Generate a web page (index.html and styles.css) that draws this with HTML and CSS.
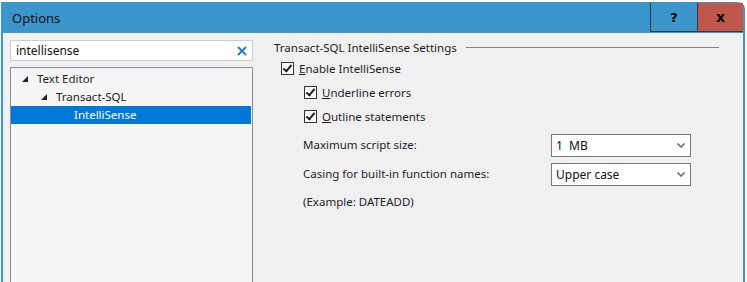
FILE: index.html
```html
<!DOCTYPE html>
<html lang="en">
<head>
    <meta charset="UTF-8">
    <title>Options</title>
    <link rel="stylesheet" href="styles.css">
</head>
<body>
    <div class="window">
        <div class="titlebar">
            <span class="title">Options</span>
            <div class="title-buttons">
                <div class="tbtn help">?</div>
                <div class="tbtn close">x</div>
            </div>
        </div>
        <div class="content">
            <div class="left-pane">
                <div class="search">
                    <span class="search-text">intellisense</span>
                    <svg class="search-clear" width="10" height="10" viewBox="0 0 10 10">
                        <path d="M1 1 L9 9 M9 1 L1 9" stroke="#1e7ad0" stroke-width="1.8"/>
                    </svg>
                </div>
                <div class="tree">
                    <div class="tree-row level0"><span class="arrow"></span>Text Editor</div>
                    <div class="tree-row level1"><span class="arrow"></span>Transact-SQL</div>
                    <div class="tree-row level2 selected">IntelliSense</div>
                </div>
            </div>
            <div class="right-pane">
                <div class="group-title">
                    <span>Transact-SQL IntelliSense Settings</span>
                    <div class="group-line"></div>
                </div>
                <label class="check"><span class="box"></span><span><u>E</u>nable IntelliSense</span></label>
                <div class="sub">
                    <label class="check"><span class="box"></span><span><u>U</u>nderline errors</span></label>
                    <label class="check"><span class="box"></span><span><u>O</u>utline statements</span></label>
                    <div class="fields">
                        <div class="field">
                            <span>Maximum script size:</span>
                            <div class="select">1&nbsp; MB
                                <svg class="chev" width="8" height="5" viewBox="0 0 8 5"><path d="M0.5 0.5 L4 4 L7.5 0.5" fill="none" stroke="#707070" stroke-width="1.6"/></svg>
                            </div>
                        </div>
                        <div class="field">
                            <span>Casing for built-in function names:</span>
                            <div class="select">Upper case
                                <svg class="chev" width="8" height="5" viewBox="0 0 8 5"><path d="M0.5 0.5 L4 4 L7.5 0.5" fill="none" stroke="#707070" stroke-width="1.6"/></svg>
                            </div>
                        </div>
                        <div class="example">(Example: DATEADD)</div>
                    </div>
                </div>
            </div>
        </div>
    </div>
</body>
</html>
```

FILE: styles.css
```css
html, body {
    margin: 0;
    height: 100%;
    background: #ffffff;
    overflow: hidden;
}
body {
    font-family: "Noto Sans", "Open Sans", sans-serif;
    font-size: 11.5px;
    color: #1e1e1e;
}
.window {
    margin: 2px 0 0 1px;
    width: 744px;
    height: 290px;
    background: #f0f0f0;
    border-left: 2px solid #3c96cb;
    border-right: 2px solid #3c96cb;
    border-top-right-radius: 7px;
    box-sizing: border-box;
    display: flex;
    flex-direction: column;
}
.titlebar {
    height: 31px;
    background: #3c96cb;
    display: flex;
    justify-content: space-between;
    border-top-right-radius: 6px;
}
.title {
    font-size: 13px;
    color: #111;
    padding: 7px 0 0 9px;
}
.title-buttons {
    display: flex;
    margin-top: 1px;
    height: 30px;
}
.tbtn {
    width: 46px;
    height: 29px;
    box-sizing: border-box;
    border-bottom: 1px solid #3a3a3a;
    border-left: 1px solid #3a3a3a;
    display: flex;
    align-items: center;
    justify-content: center;
    font-family: "DejaVu Sans", sans-serif;
    font-weight: bold;
    font-size: 13px;
    color: #000;
}
.help {
    width: 47px;
}
.close {
    background: #c0574c;
    font-size: 14px;
}
.content {
    flex: 1;
    display: flex;
}
.left-pane {
    width: 243px;
    padding: 7px 0 0 7px;
    display: flex;
    flex-direction: column;
}
.search {
    height: 21px;
    background: #fff;
    border: 1px solid #cdcdda;
    box-sizing: border-box;
    display: flex;
    align-items: center;
    justify-content: space-between;
    padding: 0 5px 0 5px;
    font-size: 12px;
}
.search-text {
    color: #111;
}
.tree {
    margin-top: 6px;
    flex: 1;
    background: #f5f5f5;
    border: 1px solid #8a8a99;
    padding-top: 2px;
}
.tree-row {
    height: 18px;
    line-height: 18px;
    display: flex;
    align-items: center;
    color: #1e1e1e;
}
.arrow {
    width: 0;
    height: 0;
    border-left: 6px solid transparent;
    border-bottom: 6px solid #222;
    margin-right: 9px;
}
.level0 {
    padding-left: 11px;
}
.level1 {
    padding-left: 30px;
}
.level2 {
    padding-left: 63px;
}
.selected {
    background: #0078d7;
    color: #fff;
    margin-right: 1px;
}
.right-pane {
    flex: 1;
    padding: 7px 0 0 21px;
}
.group-title {
    display: flex;
    align-items: center;
    height: 14px;
}
.group-line {
    flex: 1;
    margin: 0 24px 0 9px;
    border-top: 1px solid #808080;
}
.check {
    display: flex;
    align-items: center;
    height: 13px;
    margin-top: 8px;
    margin-left: 7px;
}
.check .box {
    width: 13px;
    height: 13px;
    box-sizing: border-box;
    border: 1px solid #333;
    background: #fff;
    margin-right: 5px;
    position: relative;
}
.check .box::after {
    content: "";
    position: absolute;
    left: 3px;
    top: 0px;
    width: 3px;
    height: 7px;
    border-right: 2px solid #222;
    border-bottom: 2px solid #222;
    transform: rotate(40deg);
}
.sub {
    padding-left: 22px;
}
.sub .check {
    margin-left: 8px;
    margin-top: 11px;
}
.fields {
    padding: 11px 0 0 7px;
    width: 388px;
}
.field {
    display: flex;
    justify-content: space-between;
    align-items: flex-start;
    height: 23px;
    margin-bottom: 6px;
}
.field span {
    padding-top: 3px;
}
.select {
    width: 140px;
    height: 23px;
    box-sizing: border-box;
    border: 1px solid #7a7a7a;
    background: #fff;
    display: flex;
    align-items: center;
    justify-content: space-between;
    padding: 0 5px 0 4px;
    color: #111;
    font-size: 12px;
}
.example {
    padding-top: 2px;
}
```
